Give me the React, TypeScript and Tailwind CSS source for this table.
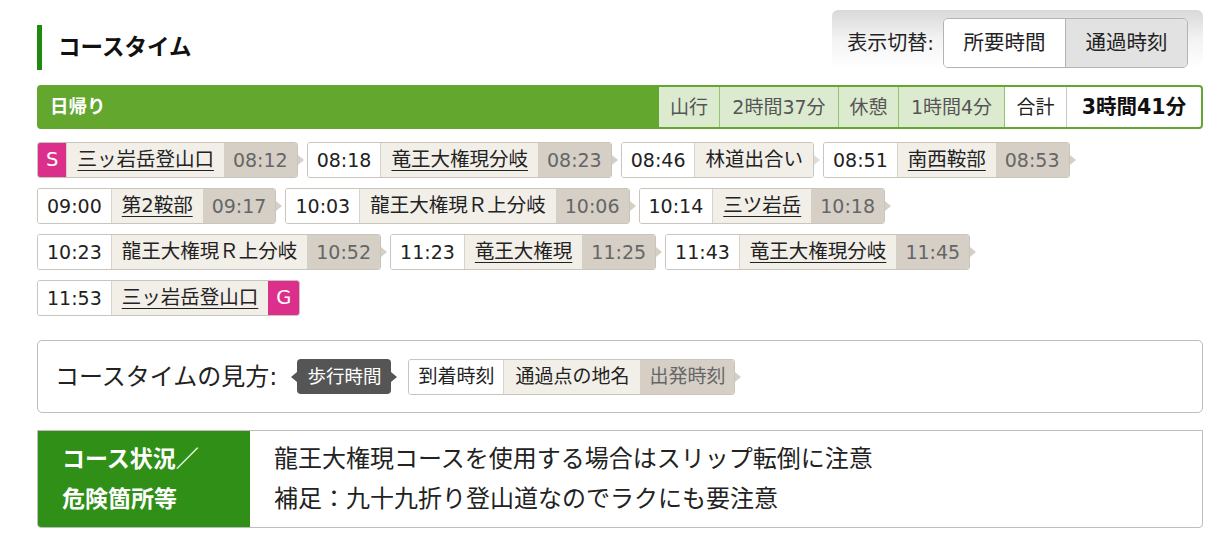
import React from "react";

type Stop = {
  arr?: string;
  name: string;
  link?: boolean;
  dep?: string;
  start?: boolean;
  goal?: boolean;
};

const stops: Stop[] = [
  { start: true, name: "三ッ岩岳登山口", link: true, dep: "08:12" },
  { arr: "08:18", name: "竜王大権現分岐", link: true, dep: "08:23" },
  { arr: "08:46", name: "林道出合い" },
  { arr: "08:51", name: "南西鞍部", link: true, dep: "08:53" },
  { arr: "09:00", name: "第2鞍部", link: true, dep: "09:17" },
  { arr: "10:03", name: "龍王大権現Ｒ上分岐", dep: "10:06" },
  { arr: "10:14", name: "三ツ岩岳", link: true, dep: "10:18" },
  { arr: "10:23", name: "龍王大権現Ｒ上分岐", dep: "10:52" },
  { arr: "11:23", name: "竜王大権現", link: true, dep: "11:25" },
  { arr: "11:43", name: "竜王大権現分岐", link: true, dep: "11:45" },
  { arr: "11:53", name: "三ッ岩岳登山口", link: true, goal: true },
];

function Arrow({ tone }: { tone: "dep" | "name" }) {
  return (
    <span
      className={
        tone === "dep"
          ? "h-0 w-0 border-y-[5px] border-l-[6px] border-y-transparent border-l-[#d5cfc6]"
          : "h-0 w-0 border-y-[5px] border-l-[6px] border-y-transparent border-l-[#e2ddd4]"
      }
    />
  );
}

function StopChip({ s }: { s: Stop }) {
  return (
    <div className="flex items-center">
      <div className="flex h-[36px] overflow-hidden rounded-[3px] border border-[#c9c5bd] text-[19.5px] text-[#222]">
        {s.start && (
          <span className="flex items-center bg-[#dc2f8c] px-[8px] text-white">S</span>
        )}
        {s.arr && (
          <span className="flex items-center bg-white px-[9px] text-[19px]">{s.arr}</span>
        )}
        <span className="flex items-center border-l border-[#d8d4cc] bg-[#f2efe9] px-[10px]">
          <span className={s.link ? "underline underline-offset-[4px]" : ""}>{s.name}</span>
        </span>
        {s.dep && (
          <span className="flex items-center bg-[#d5cfc6] px-[9px] text-[19px] text-[#666]">{s.dep}</span>
        )}
        {s.goal && (
          <span className="flex items-center bg-[#dc2f8c] px-[8px] text-white">G</span>
        )}
      </div>
      {!s.goal && <Arrow tone={s.dep ? "dep" : "name"} />}
    </div>
  );
}

export default function App() {
  return (
    <div className="min-h-[553px] w-[1225px] bg-white font-['DejaVu_Sans','Noto_Sans_CJK_JP',sans-serif] text-[#222]">
      <div className="ml-[37px] w-[1166px] pt-[10px]">
        {/* Header: title left, view toggle right */}
        <div className="flex items-start justify-between">
          <h2 className="mt-[15px] flex h-[45px] items-center border-l-[5px] border-[#1f8a0f] pl-[16px] text-[22.5px] font-bold text-[#111]">
            コースタイム
          </h2>
          <div className="flex items-center gap-[9px] rounded-[6px] bg-gradient-to-b from-[#d9d9d9] via-[#f3f3f3] to-white px-[15px] pt-[8px]">
            <span className="text-[20px] text-[#222]">表示切替:</span>
            <div className="flex h-[50px] overflow-hidden rounded-[5px] border border-[#b3b3b3] text-[20.5px]">
              <span className="flex w-[121px] items-center justify-center bg-white">所要時間</span>
              <span className="flex w-[122px] items-center justify-center border-l border-[#b3b3b3] bg-[#e2e2e2]">
                通過時刻
              </span>
            </div>
          </div>
        </div>

        {/* Day summary bar */}
        <div className="mt-[15px] flex h-[44px] overflow-hidden rounded-[4px] border-2 border-[#63a72f] bg-[#63a72f]">
          <div className="flex flex-1 items-center pl-[11px] text-[18.5px] font-bold text-white">日帰り</div>
          <div className="flex text-[19px] text-[#555]">
            <span className="flex w-[60px] items-center justify-center bg-[#dcebd0]">山行</span>
            <span className="flex w-[119px] items-center justify-center border-l border-[#92c66c] bg-[#dcebd0]">2時間37分</span>
            <span className="flex w-[60px] items-center justify-center border-l border-[#92c66c] bg-[#dcebd0]">休憩</span>
            <span className="flex w-[106px] items-center justify-center border-l border-[#92c66c] bg-[#dcebd0]">1時間4分</span>
            <span className="flex w-[62px] items-center justify-center border-l border-[#92c66c] bg-white text-[#222]">合計</span>
            <span className="flex w-[135px] items-center justify-center border-l border-[#c9c9c9] bg-white text-[20.5px] font-bold text-[#111]">
              3時間41分
            </span>
          </div>
        </div>

        {/* Course stops */}
        <div className="mt-[13px] flex flex-wrap gap-x-[3px] gap-y-[10px]">
          {stops.map((s, i) => (
            <StopChip key={i} s={s} />
          ))}
        </div>

        {/* Legend */}
        <div className="mt-[24px] flex h-[73px] items-center rounded-[5px] border border-[#bdbdbd] pl-[17px]">
          <span className="text-[24px] text-[#222]">コースタイムの見方:</span>
          <div className="ml-[14px] flex items-center">
            <span className="h-0 w-0 border-y-[5px] border-r-[6px] border-y-transparent border-r-[#555]" />
            <span className="flex h-[35px] items-center rounded-[4px] bg-[#555] px-[10px] text-[18.5px] text-white">歩行時間</span>
            <span className="h-0 w-0 border-y-[5px] border-l-[6px] border-y-transparent border-l-[#555]" />
          </div>
          <div className="ml-[11px] flex items-center">
            <div className="flex h-[36px] overflow-hidden rounded-[3px] border border-[#c9c5bd] text-[19px]">
              <span className="flex items-center bg-white px-[9px]">到着時刻</span>
              <span className="flex items-center border-l border-[#d8d4cc] bg-[#f2efe9] px-[11px]">通過点の地名</span>
              <span className="flex items-center bg-[#d5cfc6] px-[9px] text-[#666]">出発時刻</span>
            </div>
            <Arrow tone="dep" />
          </div>
        </div>

        {/* Course conditions */}
        <div className="mt-[17px] flex h-[98px] overflow-hidden rounded-b-[4px] border border-[#bdbdbd]">
          <div className="flex w-[212px] flex-col justify-center bg-[#2f8f17] pl-[24px] text-[23px] font-bold leading-[40px] text-white">
            <span>コース状況／</span>
            <span>危険箇所等</span>
          </div>
          <div className="flex flex-1 flex-col justify-center pl-[24px] text-[24px] leading-[40px] text-[#222]">
            <span>龍王大権現コースを使用する場合はスリップ転倒に注意</span>
            <span>補足：九十九折り登山道なのでラクにも要注意</span>
          </div>
        </div>
      </div>
    </div>
  );
}
